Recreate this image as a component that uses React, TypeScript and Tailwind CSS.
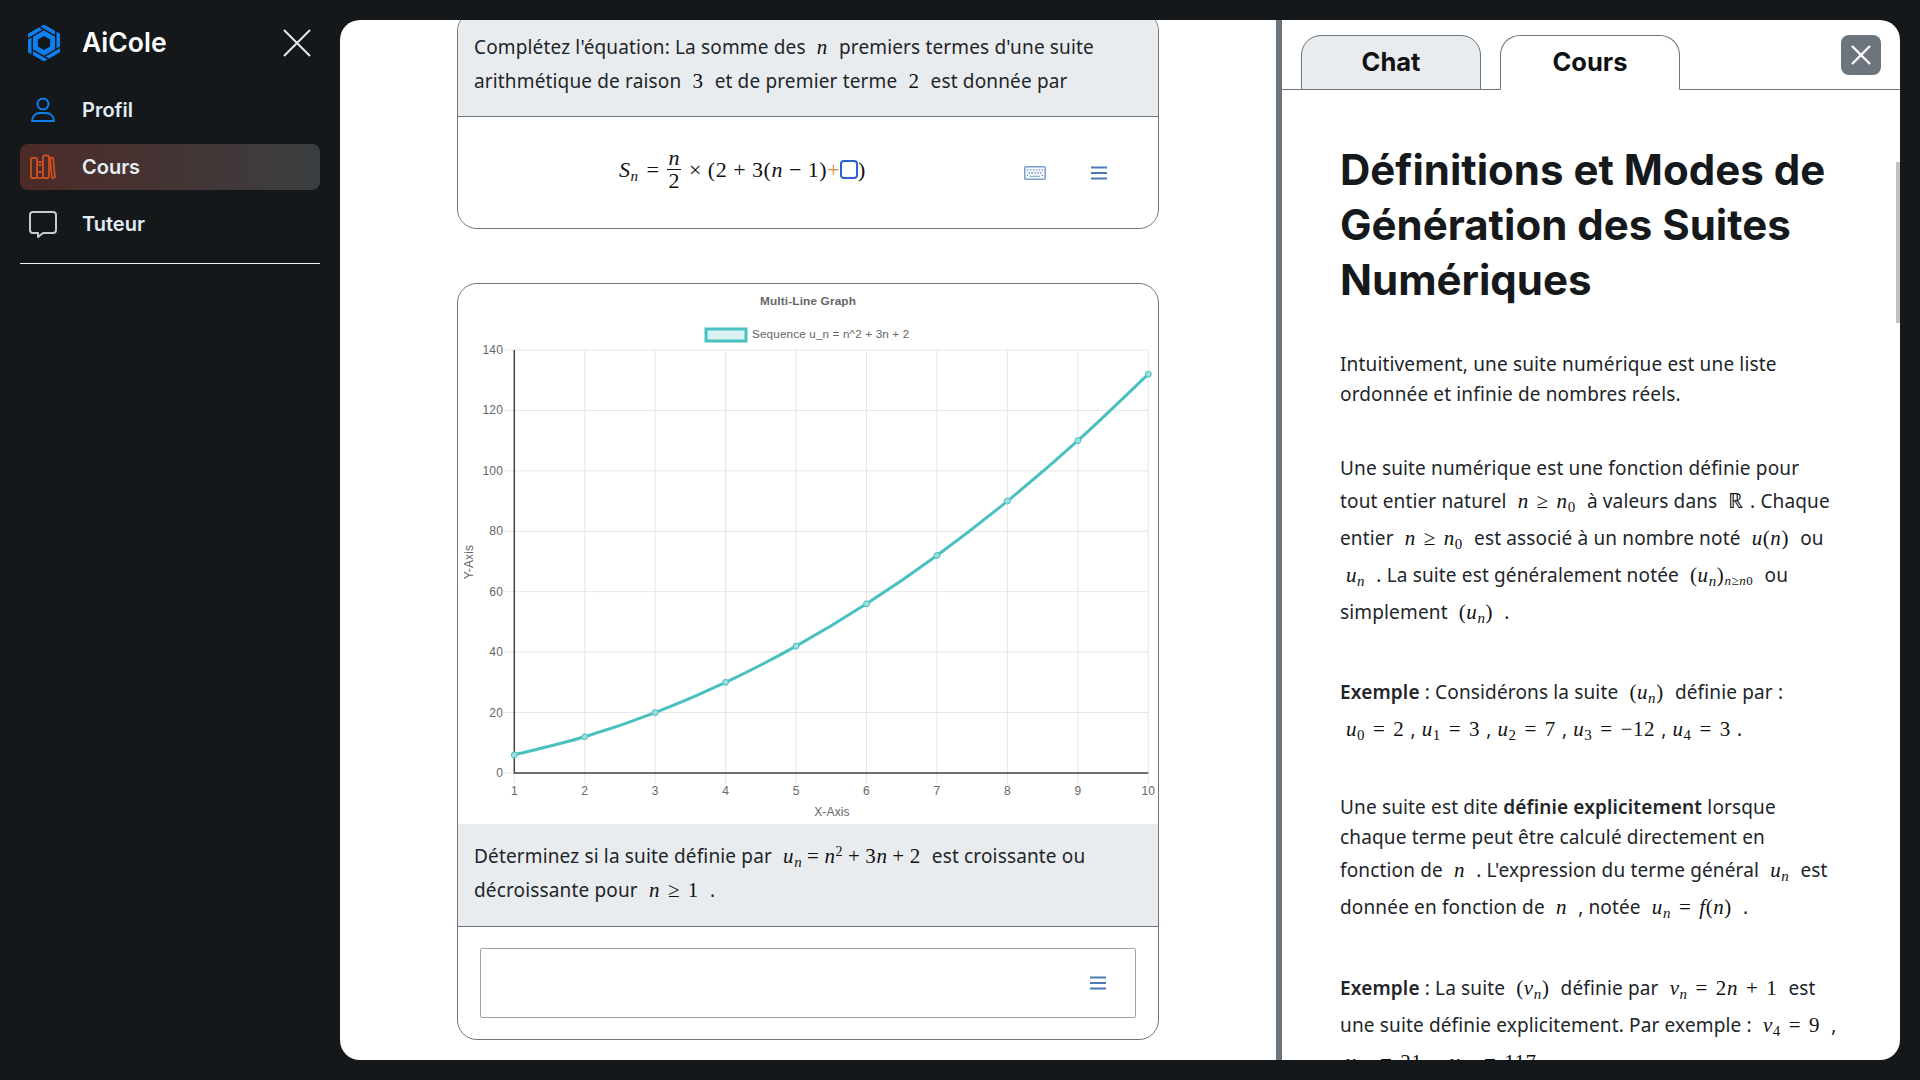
import type { ReactNode } from 'react';

const bodyFont = "font-['Noto_Sans',sans-serif] tracking-[0.15px]";

type LineProps = {
  tall?: boolean;
  children: ReactNode;
};

function Line({ tall, children }: LineProps) {
  return (
    <div className={`whitespace-nowrap ${tall ? 'h-[37px] leading-[37px]' : 'h-[30px] leading-[30px]'}`}>
      {children}
    </div>
  );
}

function M({ tight, children }: { tight?: boolean; children: ReactNode }) {
  return (
    <span
      className={`mx-[6px] font-['Liberation_Serif',serif] text-[21px] tracking-[0.6px] text-[#111] ${
        tight ? '[word-spacing:-1px]' : '[word-spacing:2px]'
      }`}
    >
      {children}
    </span>
  );
}

function I({ children }: { children: ReactNode }) {
  return <i>{children}</i>;
}

function Sub({ children }: { children: ReactNode }) {
  return <sub className="text-[15px] leading-none">{children}</sub>;
}

function Un() {
  return (
    <>
      <I>u</I>
      <Sub>
        <I>n</I>
      </Sub>
    </>
  );
}

function Hamburger() {
  return (
    <svg width="16" height="14" viewBox="0 0 16 14" className="shrink-0">
      <path d="M0 1.5h16M0 7h16M0 12.5h16" stroke="#4a7ab5" strokeWidth="2" />
    </svg>
  );
}

function KeyboardIcon() {
  return (
    <svg width="22" height="14" viewBox="0 0 22 14" className="shrink-0">
      <rect x="0.75" y="0.75" width="20.5" height="12.5" rx="1" fill="#f4f7fb" stroke="#7e9fca" strokeWidth="1.5" />
      <path d="M3 4h16M4.5 6.8h13M3 9.5h1M18 9.5h1" stroke="#5a82b8" strokeWidth="1.2" strokeDasharray="1.5 1.4" />
      <path d="M6 10.3h10" stroke="#7e9fca" strokeWidth="1" />
    </svg>
  );
}

function Logo() {
  const angles = [0, 60, 120, 180, 240, 300];
  return (
    <svg width="34" height="38" viewBox="-17 -19 34 38" className="shrink-0">
      <polygon points="0,-18.5 16,-9.25 16,9.25 0,18.5 -16,9.25 -16,-9.25" fill="#0d7fef" />
      <polygon points="0,-7 6.1,-3.5 6.1,3.5 0,7 -6.1,3.5 -6.1,-3.5" fill="#14181a" />
      {angles.map((angle) => (
        <path
          key={angle}
          d="M-4.5 -16.2L11 -7.2"
          stroke="#14181a"
          strokeWidth="1.5"
          transform={`rotate(${angle})`}
        />
      ))}
    </svg>
  );
}

function ProfileIcon() {
  return (
    <svg width="26" height="26" viewBox="0 0 26 26" fill="none" stroke="#0d7fef" strokeWidth="2">
      <circle cx="13" cy="7" r="5.5" />
      <path d="M2 24c0-5 4-8 8-8h6c4 0 8 3 8 8z" strokeLinejoin="round" />
    </svg>
  );
}

function BooksIcon() {
  return (
    <svg width="26" height="26" viewBox="0 0 26 26" fill="none" stroke="#c9501f" strokeWidth="1.8">
      <rect x="1" y="4" width="6" height="20" rx="1" />
      <rect x="7" y="8" width="6" height="16" />
      <rect x="13" y="1.5" width="6" height="22.5" rx="1.5" />
      <path d="M20 4l3-.4 2 19.8-3 .6z" strokeLinejoin="round" />
      <path d="M8.5 18h3M8.5 11h3" />
    </svg>
  );
}

function ChatIcon() {
  return (
    <svg width="28" height="27" viewBox="0 0 28 27" fill="none" stroke="#c9c9c9" strokeWidth="2">
      <path
        d="M4 1h20a3 3 0 0 1 3 3v15a3 3 0 0 1-3 3H14l-5 4v-4H4a3 3 0 0 1-3-3V4a3 3 0 0 1 3-3z"
        strokeLinejoin="round"
      />
    </svg>
  );
}

const sidebarItems = [
  { label: 'Profil', icon: <ProfileIcon />, active: false },
  { label: 'Cours', icon: <BooksIcon />, active: true },
  { label: 'Tuteur', icon: <ChatIcon />, active: false },
];

function Sidebar() {
  return (
    <aside className="w-[340px] shrink-0 px-5 font-['Inter',sans-serif]">
      <div className="flex h-[87px] items-center pb-[1px]">
        <div className="ml-[7px]">
          <Logo />
        </div>
        <span className="ml-[21px] text-[26.5px] font-semibold text-white">AiCole</span>
        <svg width="28" height="28" viewBox="0 0 28 28" className="ml-auto mr-[9px]" stroke="#e8e8e8" strokeWidth="2">
          <path d="M1 1l26 26M27 1L1 27" />
        </svg>
      </div>
      <nav className="flex flex-col gap-[11px]">
        {sidebarItems.map((item) => (
          <div
            key={item.label}
            className={`flex h-[46px] items-center rounded-lg pl-[9px] ${
              item.active ? 'bg-gradient-to-r from-[#4c2a28] to-[#3a3e40]' : ''
            }`}
          >
            <span className="flex w-[28px] justify-center">{item.icon}</span>
            <span className="ml-[25px] text-[20px] font-semibold text-[#e4ecf5]">{item.label}</span>
          </div>
        ))}
      </nav>
      <div className="mt-[16px] h-[1px] bg-[#f2f2f2]" />
    </aside>
  );
}

const data = [6, 12, 20, 30, 42, 56, 72, 90, 110, 132];
const toX = (i: number) => 56.3 + (i * 634) / 9;
const toY = (v: number) => 489 - (v * 423) / 140;

function curvePath() {
  const pts = data.map((v, i) => [toX(i), toY(v)]);
  let d = `M${pts[0][0]} ${pts[0][1]}`;
  for (let i = 0; i < pts.length - 1; i++) {
    const p0 = pts[Math.max(i - 1, 0)];
    const p1 = pts[i];
    const p2 = pts[i + 1];
    const p3 = pts[Math.min(i + 2, pts.length - 1)];
    d += ` C${p1[0] + (p2[0] - p0[0]) / 6} ${p1[1] + (p2[1] - p0[1]) / 6} ${p2[0] - (p3[0] - p1[0]) / 6} ${
      p2[1] - (p3[1] - p1[1]) / 6
    } ${p2[0]} ${p2[1]}`;
  }
  return d;
}

function Chart() {
  const yTicks = [0, 20, 40, 60, 80, 100, 120, 140];
  return (
    <svg width="699" height="540" viewBox="0 0 699 540" className="block font-['Liberation_Sans',sans-serif]">
      <text x="350" y="21" textAnchor="middle" fontSize="11.8" fontWeight="700" fill="#666">
        Multi-Line Graph
      </text>
      <rect x="248" y="45" width="40" height="12" fill="#dbf2f2" stroke="#4bc0c0" strokeWidth="3" />
      <text x="294" y="54" fontSize="11.7" fill="#666">
        Sequence u_n = n^2 + 3n + 2
      </text>
      {yTicks.map((t) => (
        <g key={t}>
          <path d={`M47 ${toY(t)}H690.3`} stroke="#e6e6e6" strokeWidth="1" />
          <text x="45" y={toY(t) + 4} textAnchor="end" fontSize="12" fill="#666">
            {t}
          </text>
        </g>
      ))}
      {data.map((_, i) => (
        <g key={i}>
          <path d={`M${toX(i)} 66V499`} stroke="#e6e6e6" strokeWidth="1" />
          <text x={toX(i)} y="511" textAnchor="middle" fontSize="12" fill="#666">
            {i + 1}
          </text>
        </g>
      ))}
      <path d="M56.3 66V489H690.3" fill="none" stroke="#444" strokeWidth="1.5" />
      <path d={curvePath()} fill="none" stroke="#4bc0c0" strokeWidth="3" />
      {data.map((v, i) => (
        <circle key={i} cx={toX(i)} cy={toY(v)} r="3" fill="#9fdcdc" stroke="#4bc0c0" strokeWidth="1" />
      ))}
      <text x="374" y="532" textAnchor="middle" fontSize="12" fill="#666">
        X-Axis
      </text>
      <text x="0" y="0" textAnchor="middle" fontSize="12" fill="#666" transform="translate(15 278) rotate(-90)">
        Y-Axis
      </text>
    </svg>
  );
}

function Exercises() {
  return (
    <section className={`w-[936px] shrink-0 overflow-hidden text-[19px] text-[#212529] ${bodyFont}`}>
      <div className="ml-[117px] mt-[-9px] flex w-[702px] flex-col gap-[54px]">
        <div className="overflow-hidden rounded-[20px] border border-[#6c757d]">
          <div className="h-[105px] overflow-hidden border-b border-[#6c757d] bg-[#e9ecef] pl-[16px] pt-[18px] leading-[34px]">
            <div className="h-[34px] whitespace-nowrap">
              Complétez l'équation: La somme des{' '}
              <M>
                <I>n</I>
              </M>{' '}
              premiers termes d'une suite
            </div>
            <div className="h-[34px] whitespace-nowrap">
              arithmétique de raison <M>3</M> et de premier terme <M>2</M> est donnée par
            </div>
          </div>
          <div className="flex h-[111px] items-center pl-[161px] pr-[51px]">
            <div className="mb-[6px] flex items-center font-['Liberation_Serif',serif] text-[22px] tracking-[0.5px] text-[#111]">
              <span className="whitespace-nowrap">
                <I>S</I>
                <Sub>
                  <I>n</I>
                </Sub>
                <span className="mx-[8px]">=</span>
              </span>
              <span className="inline-flex flex-col items-center leading-[22px]">
                <span className="border-b border-[#111] px-[1px]">
                  <I>n</I>
                </span>
                <span>2</span>
              </span>
              <span className="ml-[8px] whitespace-nowrap">
                × (2 + 3(<I>n</I> − 1)<span className="text-[#d98a3a]">+</span>
              </span>
              <span className="h-[19px] w-[18px] rounded-[4px] border-2 border-[#2b62d0]" />
              <span>)</span>
            </div>
            <div className="ml-auto flex items-center gap-[45px]">
              <KeyboardIcon />
              <Hamburger />
            </div>
          </div>
        </div>

        <div className="overflow-hidden rounded-[20px] border border-[#6c757d]">
          <Chart />
          <div className="h-[103px] overflow-hidden border-b border-[#6c757d] bg-[#e9ecef] pl-[16px] pt-[15px] leading-[34px]">
            <div className="h-[34px] whitespace-nowrap">
              Déterminez si la suite définie par{' '}
              <M tight>
                <Un /> = <I>n</I>
                <sup className="text-[14px] leading-none">2</sup> + 3<I>n</I> + 2
              </M>{' '}
              est croissante ou
            </div>
            <div className="h-[34px] whitespace-nowrap">
              décroissante pour{' '}
              <M>
                <I>n</I> ≥ 1
              </M>{' '}
              .
            </div>
          </div>
          <div className="px-[22px] py-[21px]">
            <div className="flex h-[70px] items-center justify-end rounded-[2px] border border-[#a3a3a3] pr-[29px]">
              <Hamburger />
            </div>
          </div>
        </div>
      </div>
    </section>
  );
}

function CoursePanel() {
  return (
    <section className="relative min-w-0 flex-1 overflow-hidden border-l-[6px] border-[#6c757d]">
      <div className="relative flex h-[70px] items-end gap-[19px] border-b border-[#6c757d] pl-[19px] font-['Inter',sans-serif] text-[25.5px] font-bold text-[#111]">
        <div className="mb-[-1px] flex h-[55px] w-[180px] items-center justify-center rounded-t-[20px] border border-[#6c757d] bg-[#e9ecef]">
          Chat
        </div>
        <div className="mb-[-1px] flex h-[55px] w-[180px] items-center justify-center rounded-t-[20px] border border-b-white border-[#6c757d] bg-white">
          Cours
        </div>
        <button className="absolute right-[19px] top-[15px] flex h-[40px] w-[40px] items-center justify-center rounded-lg bg-[#6c757d]">
          <svg width="20" height="20" viewBox="0 0 20 20" stroke="#fff" strokeWidth="2.4">
            <path d="M1 1l18 18M19 1L1 19" />
          </svg>
        </button>
      </div>
      <div className="absolute right-0 top-[142px] h-[161px] w-[4px] bg-[#c1c1c1]" />
      <div className={`pl-[58px] pt-[52px] text-[19px] text-[#212529] ${bodyFont}`}>
        <h1 className="font-['Inter',sans-serif] text-[42px] font-bold leading-[55px] tracking-normal text-[#16191c]">
          Définitions et Modes de
          <br />
          Génération des Suites
          <br />
          Numériques
        </h1>

        <div className="mt-[42px]">
          <Line>Intuitivement, une suite numérique est une liste</Line>
          <Line>ordonnée et infinie de nombres réels.</Line>
        </div>

        <div className="mt-[44px]">
          <Line>Une suite numérique est une fonction définie pour</Line>
          <Line tall>
            tout entier naturel{' '}
            <M>
              <I>n</I> ≥ <I>n</I>
              <Sub>0</Sub>
            </M>{' '}
            à valeurs dans <M>ℝ</M>. Chaque
          </Line>
          <Line tall>
            entier{' '}
            <M>
              <I>n</I> ≥ <I>n</I>
              <Sub>0</Sub>
            </M>{' '}
            est associé à un nombre noté{' '}
            <M>
              <I>u</I>(<I>n</I>)
            </M>{' '}
            ou
          </Line>
          <Line tall>
            <M>
              <Un />
            </M>{' '}
            . La suite est généralement notée{' '}
            <M>
              (<Un />)
              <sub className="text-[13px] leading-none">
                <I>n</I>≥<I>n</I>0
              </sub>
            </M>{' '}
            ou
          </Line>
          <Line tall>
            simplement{' '}
            <M>
              (<Un />)
            </M>{' '}
            .
          </Line>
        </div>

        <div className="mt-[43px]">
          <Line tall>
            <b className="font-semibold">Exemple</b> : Considérons la suite{' '}
            <M>
              (<Un />)
            </M>{' '}
            définie par :
          </Line>
          <Line tall>
            <M>
              <I>u</I>
              <Sub>0</Sub> = 2
            </M>
            ,
            <M>
              <I>u</I>
              <Sub>1</Sub> = 3
            </M>
            ,
            <M>
              <I>u</I>
              <Sub>2</Sub> = 7
            </M>
            ,
            <M>
              <I>u</I>
              <Sub>3</Sub> = −12
            </M>
            ,
            <M>
              <I>u</I>
              <Sub>4</Sub> = 3
            </M>
            .
          </Line>
        </div>

        <div className="mt-[44px]">
          <Line>
            Une suite est dite <b className="font-semibold">définie explicitement</b> lorsque
          </Line>
          <Line>chaque terme peut être calculé directement en</Line>
          <Line tall>
            fonction de{' '}
            <M>
              <I>n</I>
            </M>{' '}
            . L'expression du terme général{' '}
            <M>
              <Un />
            </M>{' '}
            est
          </Line>
          <Line tall>
            donnée en fonction de{' '}
            <M>
              <I>n</I>
            </M>{' '}
            , notée{' '}
            <M>
              <Un /> = <I>f</I>(<I>n</I>)
            </M>{' '}
            .
          </Line>
        </div>

        <div className="mt-[44px]">
          <Line tall>
            <b className="font-semibold">Exemple</b> : La suite{' '}
            <M>
              (<I>v</I>
              <Sub>
                <I>n</I>
              </Sub>
              )
            </M>{' '}
            définie par{' '}
            <M>
              <I>v</I>
              <Sub>
                <I>n</I>
              </Sub>{' '}
              = 2<I>n</I> + 1
            </M>{' '}
            est
          </Line>
          <Line tall>
            une suite définie explicitement. Par exemple :{' '}
            <M>
              <I>v</I>
              <Sub>4</Sub> = 9
            </M>{' '}
            ,
          </Line>
          <Line tall>
            <M>
              <I>v</I>
              <Sub>10</Sub> = 21
            </M>{' '}
            ,{' '}
            <M>
              <I>v</I>
              <Sub>58</Sub> = 117
            </M>
          </Line>
        </div>
      </div>
    </section>
  );
}

export default function App() {
  return (
    <div className="flex h-screen w-full overflow-hidden bg-[#14181a] pr-5">
      <Sidebar />
      <main className="my-5 flex min-w-0 flex-1 overflow-hidden rounded-[20px] bg-white">
        <Exercises />
        <CoursePanel />
      </main>
    </div>
  );
}
